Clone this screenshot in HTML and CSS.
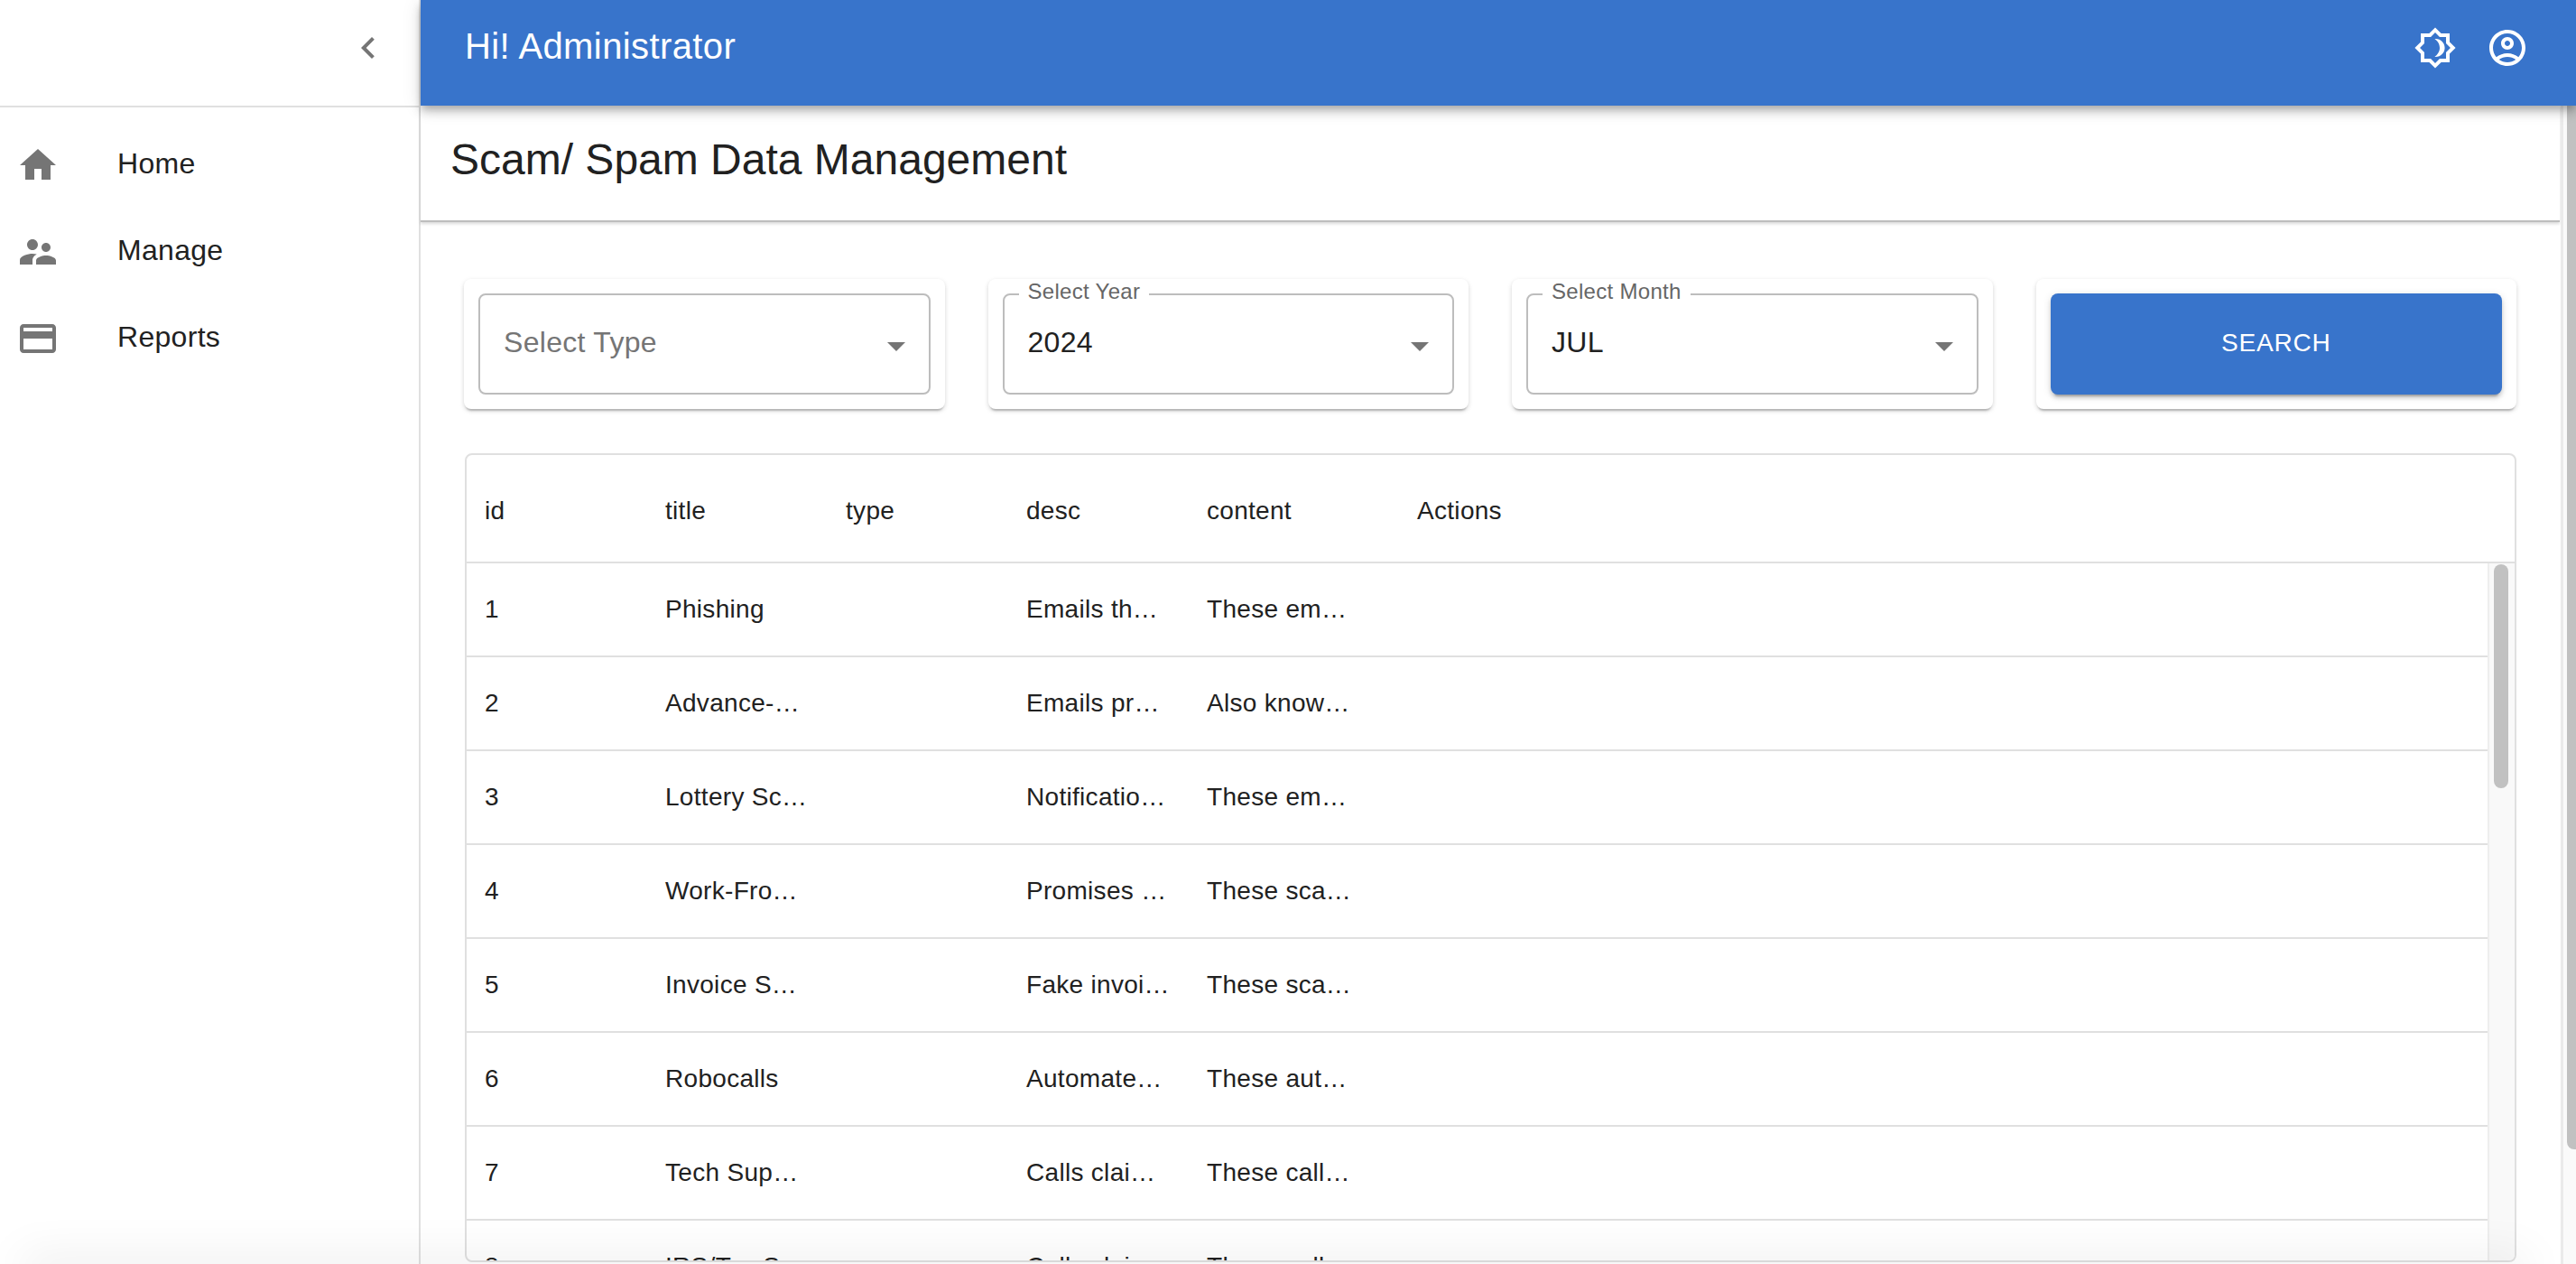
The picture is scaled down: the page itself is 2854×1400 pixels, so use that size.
FILE: index.html
```html
<!DOCTYPE html>
<html lang="en">
<head>
  <meta charset="UTF-8">
  <title>Scam/ Spam Data Management</title>
  <link rel="stylesheet" href="styles.css">
</head>
<body>
  <div class="app">
    <!-- Sidebar -->
    <aside class="sidebar">
      <div class="sidebar-head">
        <svg class="icon" viewBox="0 0 24 24"><path d="M15.41 7.41 14 6l-6 6 6 6 1.41-1.41L10.83 12z"/></svg>
      </div>
      <nav class="nav">
        <a class="nav-item">
          <svg class="icon" viewBox="0 0 24 24"><path d="M10 20v-6h4v6h5v-8h3L12 3 2 12h3v8z"/></svg>
          <span>Home</span>
        </a>
        <a class="nav-item">
          <svg class="icon" viewBox="0 0 24 24"><path d="M16.5 12c1.38 0 2.49-1.12 2.49-2.5S17.88 7 16.5 7C15.12 7 14 8.12 14 9.5s1.12 2.5 2.5 2.5zM9 11c1.66 0 2.99-1.34 2.99-3S10.66 5 9 5C7.34 5 6 6.34 6 8s1.34 3 3 3zm7.5 3c-1.83 0-5.5.92-5.5 2.75V19h11v-2.25c0-1.83-3.67-2.75-5.5-2.75zM9 13c-2.33 0-7 1.17-7 3.5V19h7v-2.25c0-.85.33-2.34 2.37-3.47C10.5 13.1 9.66 13 9 13z"/></svg>
          <span>Manage</span>
        </a>
        <a class="nav-item">
          <svg class="icon" viewBox="0 0 24 24"><path d="M20 4H4c-1.11 0-1.99.89-1.99 2L2 18c0 1.11.89 2 2 2h16c1.11 0 2-.89 2-2V6c0-1.11-.89-2-2-2zm0 14H4v-6h16v6zm0-10H4V6h16v2z"/></svg>
          <span>Reports</span>
        </a>
      </nav>
    </aside>

    <div class="main">
      <!-- Top bar -->
      <header class="topbar">
        <div class="greeting">Hi! Administrator</div>
        <div class="topbar-icons">
          <svg class="icon" viewBox="0 0 24 24"><path d="M20 8.69V4h-4.69L12 .69 8.69 4H4v4.69L.69 12 4 15.31V20h4.69L12 23.31 15.31 20H20v-4.69L23.31 12 20 8.69zm-2 5.79V18h-3.52L12 20.48 9.52 18H6v-3.52L3.52 12 6 9.52V6h3.52L12 3.52 14.48 6H18v3.52L20.48 12 18 14.48zM12.29 7c-.2 0-.4.02-.6.05C13.32 8.2 14.5 10 14.5 12s-1.18 3.8-2.81 4.95c.2.03.4.05.6.05 2.76 0 5-2.24 5-5s-2.24-5-5-5z"/></svg>
          <svg class="icon" viewBox="0 0 24 24"><path d="M12 2C6.48 2 2 6.48 2 12s4.48 10 10 10 10-4.48 10-10S17.52 2 12 2zM7.35 18.5C8.66 17.56 10.26 17 12 17s3.34.56 4.65 1.5c-1.31.94-2.91 1.5-4.65 1.5s-3.34-.56-4.65-1.5zm10.79-1.38C16.45 15.8 14.32 15 12 15s-4.45.8-6.14 2.12C4.7 15.73 4 13.95 4 12c0-4.42 3.58-8 8-8s8 3.58 8 8c0 1.95-.7 3.73-1.86 5.12z"/><path d="M12 6c-1.93 0-3.5 1.57-3.5 3.5S10.07 13 12 13s3.5-1.57 3.5-3.5S13.93 6 12 6zm0 5c-.83 0-1.5-.67-1.5-1.5S11.17 8 12 8s1.5.67 1.5 1.5S12.83 11 12 11z"/></svg>
        </div>
      </header>

      <div class="page">
        <div class="content">
          <h1 class="page-title">Scam/ Spam Data Management</h1>

          <!-- Filters -->
          <section class="filters">
            <div class="card">
              <div class="select">
                <span class="select-placeholder">Select Type</span>
                <span class="arrow"></span>
              </div>
            </div>
            <div class="card">
              <div class="select">
                <span class="select-label">Select Year</span>
                <span class="select-value">2024</span>
                <span class="arrow"></span>
              </div>
            </div>
            <div class="card">
              <div class="select">
                <span class="select-label">Select Month</span>
                <span class="select-value">JUL</span>
                <span class="arrow"></span>
              </div>
            </div>
            <div class="card">
              <button class="search-btn" type="button">Search</button>
            </div>
          </section>

          <!-- Data grid -->
          <section class="grid">
            <div class="row grid-head">
              <div class="cell">id</div>
              <div class="cell">title</div>
              <div class="cell">type</div>
              <div class="cell">desc</div>
              <div class="cell">content</div>
              <div class="cell cell-actions">Actions</div>
            </div>
            <div class="grid-body">
              <div class="grid-rows">
                <div class="row"><div class="cell">1</div><div class="cell">Phishing</div><div class="cell"></div><div class="cell">Emails th…</div><div class="cell">These em…</div></div>
                <div class="row"><div class="cell">2</div><div class="cell">Advance-…</div><div class="cell"></div><div class="cell">Emails pr…</div><div class="cell">Also know…</div></div>
                <div class="row"><div class="cell">3</div><div class="cell">Lottery Sc…</div><div class="cell"></div><div class="cell">Notificatio…</div><div class="cell">These em…</div></div>
                <div class="row"><div class="cell">4</div><div class="cell">Work-Fro…</div><div class="cell"></div><div class="cell">Promises …</div><div class="cell">These sca…</div></div>
                <div class="row"><div class="cell">5</div><div class="cell">Invoice S…</div><div class="cell"></div><div class="cell">Fake invoi…</div><div class="cell">These sca…</div></div>
                <div class="row"><div class="cell">6</div><div class="cell">Robocalls</div><div class="cell"></div><div class="cell">Automate…</div><div class="cell">These aut…</div></div>
                <div class="row"><div class="cell">7</div><div class="cell">Tech Sup…</div><div class="cell"></div><div class="cell">Calls clai…</div><div class="cell">These call…</div></div>
                <div class="row"><div class="cell">8</div><div class="cell">IRS/Tax S…</div><div class="cell"></div><div class="cell">Calls clai…</div><div class="cell">These call…</div></div>
              </div>
              <div class="grid-track"><div class="grid-thumb"></div></div>
            </div>
          </section>
        </div>

        <!-- Page scrollbar -->
        <div class="page-track"><div class="page-thumb"></div></div>
      </div>
    </div>
  </div>
  <div class="bottom-fade"></div>
</body>
</html>
```

FILE: styles.css
```css
/* General Styles */
html, body {
  margin: 0;
  padding: 0;
  height: 100%;
  overflow: hidden;
}

body {
  font-family: 'Liberation Sans', Arial, sans-serif;
  background-color: #fff;
  color: #212121;
}

.app {
  display: flex;
  height: 1400px;
}

.icon {
  display: block;
  width: 48px;
  height: 48px;
  fill: currentColor;
  flex-shrink: 0;
}

/* Sidebar */
.sidebar {
  width: 464px;
  flex-shrink: 0;
  border-right: 2px solid #e0e0e0;
  color: #757575;
}

.sidebar-head {
  height: 88px;
  display: flex;
  justify-content: flex-end;
  padding: 29px 32px 0 0;
  border-bottom: 2px solid #e0e0e0;
}

.nav {
  padding: 16px 0;
}

.nav-item {
  display: flex;
  align-items: center;
  height: 96px;
  padding-left: 18px;
}

.nav-item span {
  margin: 0 0 4px 64px;
  font-size: 32px;
  line-height: 48px;
  letter-spacing: 0.3px;
  color: #212121;
}

/* Top bar */
.main {
  flex: 1;
  min-width: 0;
  display: flex;
  flex-direction: column;
}

.topbar {
  height: 117px;
  flex-shrink: 0;
  display: flex;
  justify-content: space-between;
  padding: 29px 52px 0 49px;
  box-sizing: border-box;
  background-color: #3874cb;
  color: #fff;
  box-shadow: 0 4px 8px -2px rgba(0, 0, 0, 0.2), 0 8px 10px rgba(0, 0, 0, 0.14), 0 2px 20px rgba(0, 0, 0, 0.12);
  position: relative;
  z-index: 2;
}

.greeting {
  padding-top: 2px;
  font-size: 40px;
  line-height: 40px;
  letter-spacing: 0.4px;
}

.topbar-icons {
  display: flex;
  gap: 32px;
}

/* Page area */
.page {
  flex: 1;
  min-height: 0;
  display: flex;
}

.content {
  width: 2371px;
  flex-shrink: 0;
}

.page-title {
  margin: 0 1px 0 0;
  height: 129px;
  box-sizing: border-box;
  padding: 32px 0 0 33px;
  font-size: 48px;
  font-weight: 400;
  line-height: 56px;
  border-bottom: 2px solid #bdbdbd;
  box-shadow: 0 2px 3px rgba(0, 0, 0, 0.15);
}

/* Filters */
.filters {
  display: grid;
  grid-template-columns: repeat(4, 1fr);
  gap: 48px;
  margin: 63px 49px 0 48px;
}

.card {
  padding: 16px;
  border-radius: 8px;
  background-color: #fff;
  box-shadow: 0 4px 2px -2px rgba(0, 0, 0, 0.2), 0 2px 4px rgba(0, 0, 0, 0.1), 0 2px 6px rgba(0, 0, 0, 0.08);
}

.select {
  height: 112px;
  box-sizing: border-box;
  display: flex;
  align-items: center;
  justify-content: space-between;
  padding: 0 26px 4px 26px;
  border: 2px solid #bdbdbd;
  border-radius: 8px;
  font-size: 32px;
  letter-spacing: 0.3px;
  position: relative;
}

.select-placeholder {
  color: #757575;
}

.select-label {
  position: absolute;
  top: -18px;
  left: 16px;
  padding: 0 10px;
  background-color: #fff;
  font-size: 24px;
  line-height: 28px;
  color: #666;
}

.arrow {
  width: 0;
  height: 0;
  margin-top: 9px;
  border-left: 10px solid transparent;
  border-right: 10px solid transparent;
  border-top: 10px solid #757575;
}

.search-btn {
  display: block;
  width: 100%;
  height: 112px;
  padding-bottom: 4px;
  border: none;
  border-radius: 8px;
  background-color: #3874cb;
  color: #fff;
  font-family: inherit;
  font-size: 28px;
  letter-spacing: 0.8px;
  text-transform: uppercase;
  box-shadow: 0 6px 2px -4px rgba(0, 0, 0, 0.2), 0 4px 4px rgba(0, 0, 0, 0.14), 0 2px 10px rgba(0, 0, 0, 0.12);
}

/* Data grid */
.grid {
  margin: 49px 49px 0 49px;
  height: 896px;
  box-sizing: border-box;
  border: 2px solid #e0e0e0;
  border-radius: 8px;
  font-size: 28px;
  letter-spacing: 0.3px;
  overflow: hidden;
}

.row {
  display: grid;
  grid-template-columns: repeat(5, 200px);
  height: 104px;
  box-sizing: border-box;
  border-bottom: 2px solid #e0e0e0;
  align-items: center;
}

.grid-head {
  height: 120px;
  padding-top: 6px;
  grid-template-columns: repeat(5, 200px) 1fr;
}

.cell {
  padding-left: 20px;
  white-space: nowrap;
}

.cell-actions {
  padding-left: 53px;
}

.grid-body {
  display: flex;
  height: 772px;
}

.grid-rows {
  flex: 1;
  overflow: hidden;
}

.grid-track {
  width: 30px;
  box-sizing: border-box;
  flex-shrink: 0;
  padding: 1px 7px 0 5px;
  background-color: #f9f9f9;
  border-left: 2px solid #eee;
}

.grid-thumb {
  width: 16px;
  height: 248px;
  border-radius: 8px;
  background-color: #c1c1c1;
}

/* Page scrollbar */
.page-track {
  flex: 1;
  padding-left: 4px;
  box-sizing: border-box;
  background-color: #fafafa;
  border-left: 3px solid #eaeaea;
}

.page-thumb {
  height: 1156px;
  border-radius: 0 0 0 8px;
  background-color: #c1c1c1;
}

/* Soft shadow along the bottom edge */
.bottom-fade {
  position: absolute;
  left: 30px;
  right: 60px;
  top: 1400px;
  height: 10px;
  box-shadow: 0 0 50px 6px rgba(0, 0, 0, 0.1);
}
```
